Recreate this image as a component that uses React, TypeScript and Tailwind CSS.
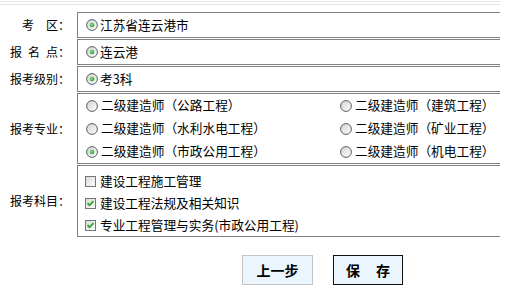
import React from "react";

function Radio({ checked }: { checked?: boolean }) {
  return (
    <svg width="12" height="12" viewBox="0 0 12 12" className="shrink-0">
      <defs>
        <linearGradient id="rgrad" x1="0" y1="0" x2="1" y2="1">
          <stop offset="0" stopColor="#d2d2cc" />
          <stop offset="1" stopColor="#ffffff" />
        </linearGradient>
        <radialGradient id="rdot" cx="0.4" cy="0.4" r="0.6">
          <stop offset="0" stopColor="#8ee68e" />
          <stop offset="1" stopColor="#2a9a2a" />
        </radialGradient>
      </defs>
      <circle cx="6" cy="6" r="5.4" fill="url(#rgrad)" stroke="#56606b" strokeWidth="1" />
      {checked && <circle cx="6" cy="6" r="2.3" fill="url(#rdot)" />}
    </svg>
  );
}

function Check({ checked }: { checked?: boolean }) {
  return (
    <svg width="11" height="11" viewBox="0 0 11 11" className="shrink-0">
      <defs>
        <linearGradient id="cgrad" x1="0" y1="0" x2="1" y2="1">
          <stop offset="0" stopColor="#d8d8d2" />
          <stop offset="1" stopColor="#ffffff" />
        </linearGradient>
      </defs>
      <rect x="0.5" y="0.5" width="10" height="10" fill="url(#cgrad)" stroke="#6f7880" strokeWidth="1" />
      {checked && (
        <path d="M2.5 5.2 L4.5 7.3 L8.5 3.2" fill="none" stroke="#28a028" strokeWidth="1.8" />
      )}
    </svg>
  );
}

function Label({ children }: { children: React.ReactNode }) {
  return (
    <div className="w-[77px] shrink-0 flex items-center justify-end pr-[7px] whitespace-nowrap text-[12px]">
      {children}
    </div>
  );
}

const boxCls = "flex-1 border-t border-l border-b border-[#808080] text-[12.7px]";

export default function App() {
  return (
    <div className="w-[514px] h-[294px] bg-white text-black text-[12px] leading-none font-['Noto_Sans_CJK_SC','Noto_Sans',sans-serif] overflow-hidden">
      <div className="w-[500px] pt-[1px]">
        <div className="h-px bg-[#e6e6e6]" />
        <div className="h-[2px]" />
        <div className="h-px bg-[#e6e6e6]" />
      </div>

      <div className="mt-[7px] w-[500px] flex flex-col gap-[1px]">
        <div className="flex h-[26px]">
          <Label>
            考<span className="inline-block w-[12px]" />区：
          </Label>
          <div className={`${boxCls} flex items-center pl-[8px] gap-[2px]`}>
            <Radio checked />
            <span>江苏省连云港市</span>
          </div>
        </div>

        <div className="flex h-[26px]">
          <Label>
            报<span className="inline-block w-[6px]" />名<span className="inline-block w-[6px]" />点：
          </Label>
          <div className={`${boxCls} flex items-center pl-[8px] gap-[2px]`}>
            <Radio checked />
            <span>连云港</span>
          </div>
        </div>

        <div className="flex h-[26px]">
          <Label>报考级别：</Label>
          <div className={`${boxCls} flex items-center pl-[8px] gap-[2px]`}>
            <Radio checked />
            <span>考3科</span>
          </div>
        </div>

        <div className="flex h-[71px]">
          <Label>报考专业：</Label>
          <div className={`${boxCls} pl-[8px] grid grid-cols-[254px_1fr] auto-rows-[23px]`}>
            {[
              ["二级建造师（公路工程）", false],
              ["二级建造师（建筑工程）", false],
              ["二级建造师（水利水电工程）", false],
              ["二级建造师（矿业工程）", false],
              ["二级建造师（市政公用工程）", true],
              ["二级建造师（机电工程）", false],
            ].map(([t, c], i) => (
              <div key={i} className="flex items-center gap-[3px] whitespace-nowrap">
                <Radio checked={c as boolean} />
                <span>{t as string}</span>
              </div>
            ))}
          </div>
        </div>

        <div className="flex h-[72px]">
          <Label>报考科目：</Label>
          <div className={`${boxCls} pl-[7px] pt-[4px] flex flex-col`}>
            {[
              ["建设工程施工管理", false],
              ["建设工程法规及相关知识", true],
              ["专业工程管理与实务(市政公用工程)", true],
            ].map(([t, c], i) => (
              <div key={i} className="h-[22px] flex items-center gap-[4px] whitespace-nowrap">
                <Check checked={c as boolean} />
                <span>{t as string}</span>
              </div>
            ))}
          </div>
        </div>
      </div>

      <div className="mt-[18px] ml-[242px] flex gap-[20px]">
        <button className="w-[71px] h-[30px] border border-[#c4c4c4] bg-[#eaf5fd] text-[14px] font-bold flex items-center justify-center">
          上一步
        </button>
        <button className="w-[70px] h-[30px] border border-[#111] bg-[#eaf5fd] text-[14px] font-bold flex items-center justify-center">
          保<span className="inline-block w-[16px]" />存
        </button>
      </div>
    </div>
  );
}
